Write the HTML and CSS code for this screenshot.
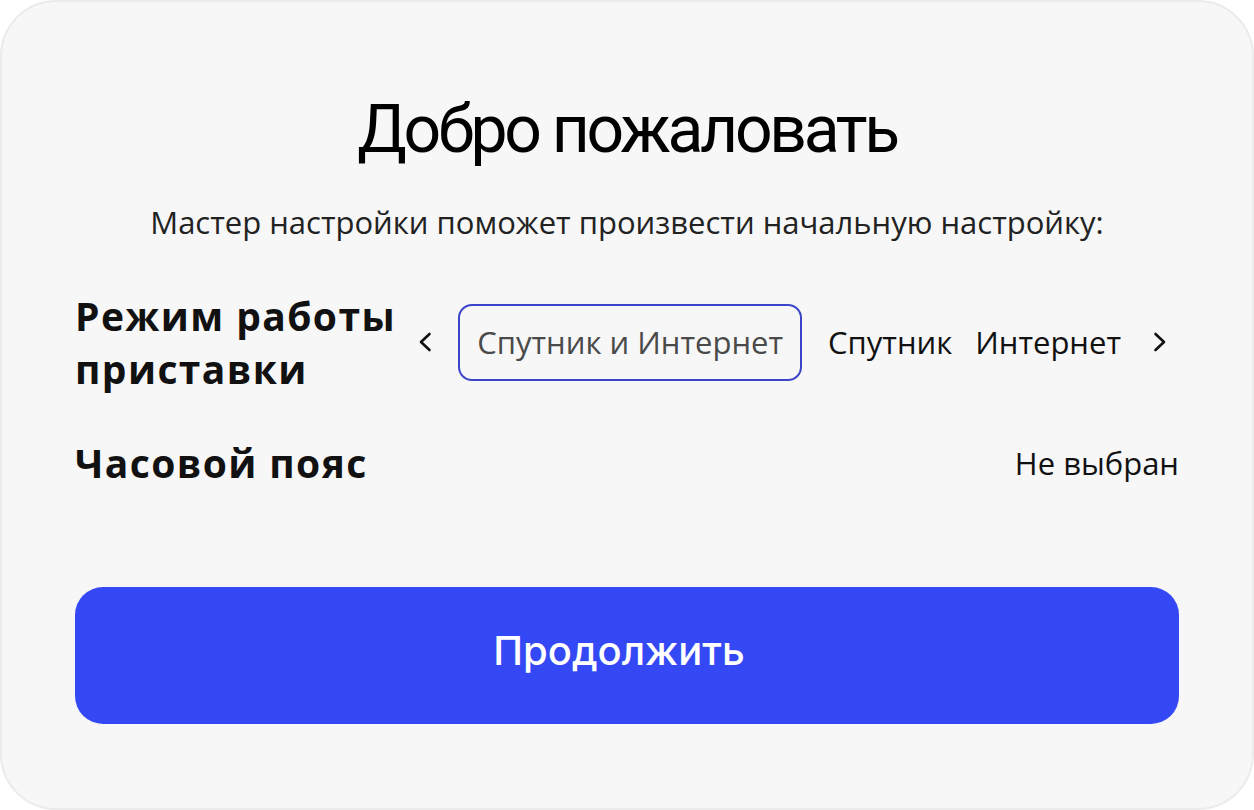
FILE: index.html
```html
<!DOCTYPE html>
<html lang="ru">
<head>
<meta charset="utf-8">
<link rel="stylesheet" href="styles.css">
</head>
<body>
<main class="card">
  <h1 class="title">Добро пожаловать</h1>
  <p class="subtitle">Мастер настройки поможет произвести начальную настройку:</p>
  <section class="settings">
    <div class="row row-mode">
      <div class="label">Режим работы<br>приставки</div>
      <div class="selector">
        <svg class="chev" width="14" height="22" viewBox="0 0 14 22"><path d="M11.5 3 L3 11 L11.5 19" fill="none" stroke="#111" stroke-width="2.6" stroke-linecap="round" stroke-linejoin="round"/></svg>
        <span class="chip">Спутник и Интернет</span>
        <span class="opts">
          <span class="opt">Спутник</span>
          <span class="opt">Интернет</span>
        </span>
        <svg class="chev chev-right" width="14" height="22" viewBox="0 0 14 22"><path d="M2.5 3 L11 11 L2.5 19" fill="none" stroke="#111" stroke-width="2.6" stroke-linecap="round" stroke-linejoin="round"/></svg>
      </div>
    </div>
    <div class="row row-tz">
      <div class="label">Часовой пояс</div>
      <div class="value">Не выбран</div>
    </div>
  </section>
  <button class="continue">Продолжить</button>
</main>
</body>
</html>
```

FILE: styles.css
```css
html, body {
  margin: 0;
  padding: 0;
  background: #ffffff;
}
.card {
  box-sizing: border-box;
  width: 1254px;
  height: 810px;
  background: #f7f7f7;
  border: 2px solid #ebebeb;
  border-radius: 56px;
  padding: 88px 73px 0 73px;
  display: flex;
  flex-direction: column;
  font-family: "Open Sans", sans-serif;
}
.title {
  margin: 0;
  text-align: center;
  font-family: Roboto, sans-serif;
  font-weight: 400;
  font-size: 66px;
  letter-spacing: -0.05em;
  line-height: 80px;
  color: #000;
}
.subtitle {
  margin: 32px 0 0 0;
  text-align: center;
  font-size: 31px;
  line-height: 40px;
  color: #222;
}
.settings {
  margin-top: 47px;
  display: flex;
  flex-direction: column;
  gap: 41px;
}
.row {
  display: flex;
  align-items: center;
  justify-content: space-between;
}
.label {
  font-weight: 700;
  font-size: 39px;
  line-height: 53px;
  letter-spacing: 0.036em;
  color: #111;
}
.selector {
  display: flex;
  align-items: center;
  gap: 26px;
  margin-right: 12px;
}
.chev-right {
  margin-left: 6px;
}
.opts {
  display: flex;
  gap: 23px;
}
.chip {
  box-sizing: border-box;
  height: 77px;
  padding: 0 17px;
  display: flex;
  align-items: center;
  border: 2.5px solid #3c45c9;
  border-radius: 14px;
  font-size: 31px;
  color: #4a4a4a;
}
.opt {
  font-size: 31px;
  color: #111;
}
.value {
  font-size: 31px;
  color: #111;
}
.continue {
  margin-top: auto;
  margin-bottom: 84px;
  height: 137px;
  padding: 0 16px 10px 0;
  border: none;
  border-radius: 28px;
  background: #3449f5;
  color: #fff;
  font-family: Inter, sans-serif;
  font-weight: 500;
  font-size: 40px;
}
```
